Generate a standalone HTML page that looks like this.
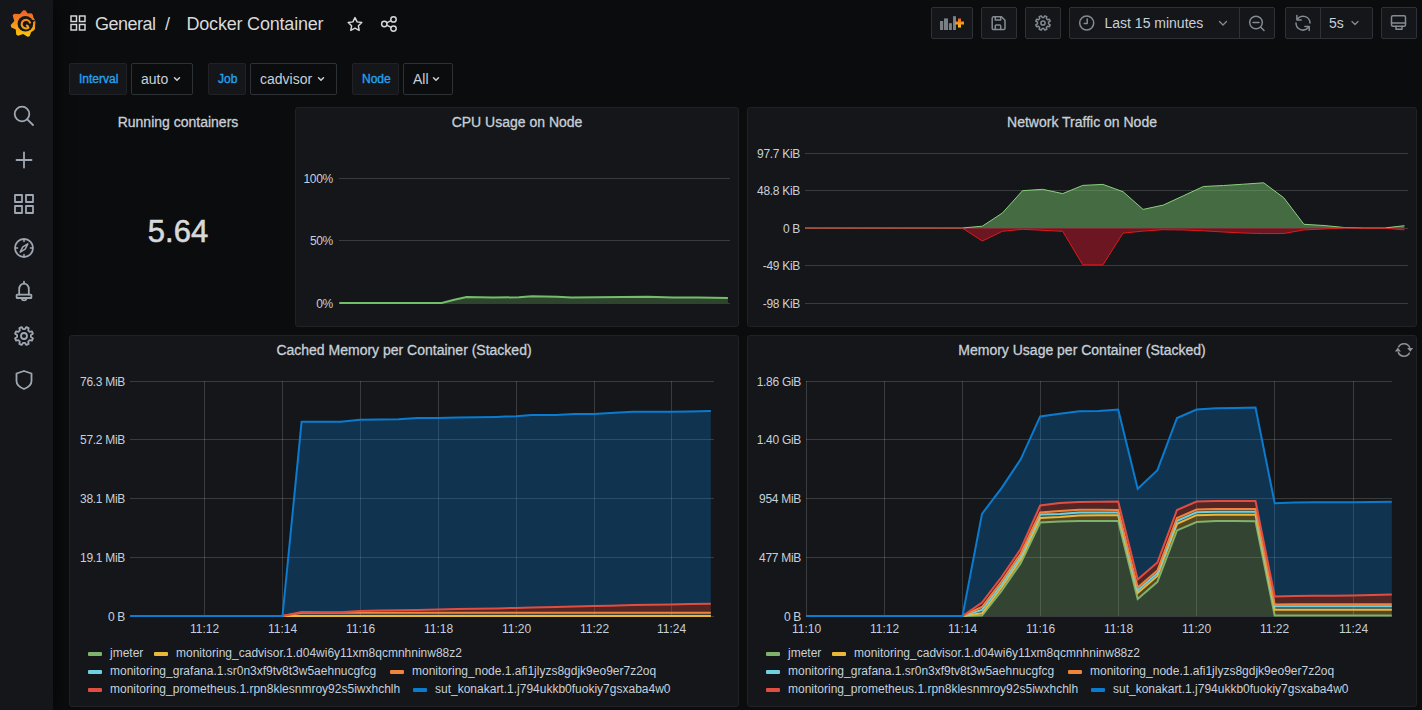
<!DOCTYPE html>
<html><head><meta charset="utf-8"><style>
*{box-sizing:border-box}
html,body{margin:0;padding:0}
body{width:1422px;height:710px;overflow:hidden;background:#0b0c0e;font-family:"Liberation Sans",sans-serif;position:relative;color:#c7d0d9}
.a{position:absolute}
.side{left:0;top:0;width:53px;height:710px;background:#141619;box-shadow:0 0 20px rgba(0,0,0,0.7)}
.btn{position:absolute;top:7px;height:32px;background:#141619;border:1px solid #2c3235;border-radius:2px}
.lbl{position:absolute;top:63px;height:32px;background:#141619;border:1px solid #202226;border-radius:2px;color:#24a2f0;font-size:12px;font-weight:400;line-height:30px;padding-left:9px;-webkit-text-stroke:0.35px #24a2f0}
.dd{position:absolute;top:63px;height:32px;background:#0b0c0e;border:1px solid #2c3235;border-radius:2px;color:#c7d0d9;font-size:14px;line-height:30px;padding-left:9px}
.panel{position:absolute;background:#141619;border:1px solid #202226;border-radius:3px}
.ptitle{position:absolute;left:0;right:0;top:6px;text-align:center;font-size:14px;color:#c7d0d9;-webkit-text-stroke:0.3px #c7d0d9;white-space:nowrap}
.ylab{position:absolute;font-size:12px;letter-spacing:-0.3px;color:#c7d0d9;text-align:right;white-space:nowrap;width:80px}
.xlab{position:absolute;font-size:12px;color:#c7d0d9;text-align:center;white-space:nowrap;width:60px}
.leg{position:absolute;font-size:12px;color:#c7d0d9;white-space:nowrap}
.sw{position:absolute;width:14px;height:4px;border-radius:1px}
svg{position:absolute;left:0;top:0;overflow:visible}
</style></head><body>

<div class="a side"></div>

<svg width="53" height="400" style="left:0;top:0">
 <defs>
  <linearGradient id="lg" gradientUnits="userSpaceOnUse" x1="0" y1="10" x2="0" y2="37">
   <stop offset="0" stop-color="#f05a28"/><stop offset="1" stop-color="#fbca0a"/>
  </linearGradient>
  <linearGradient id="lg2" gradientUnits="userSpaceOnUse" x1="0" y1="10" x2="0" y2="37">
   <stop offset="0" stop-color="#f05a28"/><stop offset="1" stop-color="#fbca0a"/>
  </linearGradient>
 </defs>
 <path fill="url(#lg)" d="M23.26,10.36 L25.34,10.32 L27.80,13.49 L31.11,13.16 L32.65,14.30 L33.48,17.81 L35.08,20.37 L35.45,22.04 L35.08,25.21 L35.02,28.60 L34.12,30.16 L31.20,31.90 L29.60,36.25 L27.57,36.87 L23.14,34.10 L18.03,35.75 L16.22,34.58 L15.78,29.49 L11.14,27.16 L10.75,25.02 L14.32,21.02 L12.63,15.51 L14.04,13.75 L19.89,14.10 Z"/>
 <circle cx="25.4" cy="23.8" r="7.8" fill="#141619"/>
 <path fill="#141619" d="M31.2,19.6 L35.6,20.6 L32.4,22.6 Z"/>
 <path fill="none" stroke="url(#lg2)" stroke-width="2.1" stroke-linecap="round" d="M30.0,22.6 A4.3,4.3 0 1 0 28.4,27.7 Q28.0,26.0 26.8,25.5"/>
 <g fill="none" stroke="#9fa7b3" stroke-width="1.8" stroke-linecap="round" stroke-linejoin="round">
  <circle cx="22" cy="114" r="7.3"/><line x1="27.3" y1="119.3" x2="33" y2="125"/>
  <line x1="24" y1="152.5" x2="24" y2="167.5"/><line x1="16.5" y1="160" x2="31.5" y2="160"/>
  <rect x="15" y="195" width="7" height="7"/><rect x="26" y="195" width="7" height="7"/><rect x="15" y="206" width="7" height="7"/><rect x="26" y="206" width="7" height="7"/>
  <circle cx="24" cy="248" r="9"/>
  <path d="M24,239.8 v1.8 M32.2,248 h-1.8 M24,256.2 v-1.8 M15.8,248 h1.8" stroke-width="1.5"/>
  <path d="M27.8,243.8 L25.2,249.1 L20.2,252.2 L22.8,246.9 Z" stroke-width="1.5"/>
  <path d="M19.2,294.5 V289 A4.8,5.4 0 0 1 28.8,289 V294.5"/><rect x="16.6" y="294.6" width="14.8" height="3.4" rx="0.6"/><path d="M21.6,298.4 A2.6,2.6 0 0 0 26.6,298.4"/><line x1="24" y1="281.6" x2="24" y2="283.4"/>
  <circle cx="24" cy="336" r="3"/>
  <path d="M30.92,337.04 L32.91,338.29 L31.92,340.68 L29.63,340.16 L28.16,341.63 L28.68,343.92 L26.29,344.91 L25.04,342.92 L22.96,342.92 L21.71,344.91 L19.32,343.92 L19.84,341.63 L18.37,340.16 L16.08,340.68 L15.09,338.29 L17.08,337.04 L17.08,334.96 L15.09,333.71 L16.08,331.32 L18.37,331.84 L19.84,330.37 L19.32,328.08 L21.71,327.09 L22.96,329.08 L25.04,329.08 L26.29,327.09 L28.68,328.08 L28.16,330.37 L29.63,331.84 L31.92,331.32 L32.91,333.71 L30.92,334.96 Z"/>
  <path d="M24,371 L31.5,373.5 L31.5,381 Q31.5,386 24,389 Q16.5,386 16.5,381 L16.5,373.5 Z"/>
 </g>
</svg>


<svg width="1422" height="50" style="left:0;top:0">
 <g fill="none" stroke="#d8d9da" stroke-width="1.45">
  <rect x="71" y="16" width="5.5" height="5.5"/><rect x="79.5" y="16" width="5.5" height="5.5"/><rect x="71" y="24.5" width="5.5" height="5.5"/><rect x="79.5" y="24.5" width="5.5" height="5.5"/>
  <path stroke-linejoin="round" d="M355,17.6 L357.1,21.9 L361.8,22.5 L358.4,25.8 L359.2,30.4 L355,28.2 L350.8,30.4 L351.6,25.8 L348.2,22.5 L352.9,21.9 Z"/>
  <circle cx="384.3" cy="24" r="2.7"/><circle cx="393.5" cy="19.4" r="2.7"/><circle cx="393.5" cy="28.6" r="2.7"/>
  <line x1="386.7" y1="22.8" x2="391.1" y2="20.6"/><line x1="386.7" y1="25.2" x2="391.1" y2="27.4"/>
 </g>
</svg>
<div class="a" style="left:95px;top:14px;font-size:18px;line-height:20px;color:#d8d9da;white-space:nowrap;letter-spacing:-0.5px">General</div>
<div class="a" style="left:165px;top:14px;font-size:18px;line-height:20px;color:#d8d9da">/</div>
<div class="a" style="left:186.5px;top:14px;font-size:18px;line-height:20px;color:#d8d9da;white-space:nowrap;letter-spacing:-0.2px">Docker Container</div>

<div class="btn" style="left:931px;width:42px"></div>
<div class="btn" style="left:981px;width:36px"></div>
<div class="btn" style="left:1025px;width:36px"></div>
<div class="btn" style="left:1069px;width:206px"></div>
<div class="btn" style="left:1285px;width:88px"></div>
<div class="btn" style="left:1381px;width:36px"></div>
<div class="a" style="left:1239px;top:8px;width:1px;height:30px;background:#2c3235"></div>
<div class="a" style="left:1320px;top:8px;width:1px;height:30px;background:#2c3235"></div>
<div class="a" style="left:1104.5px;top:14px;font-size:14px;line-height:18px;color:#c7d0d9;white-space:nowrap">Last 15 minutes</div>
<div class="a" style="left:1329px;top:14px;font-size:14px;line-height:18px;color:#c7d0d9;white-space:nowrap">5s</div>
<svg width="1422" height="50" style="left:0;top:0">
 <defs><linearGradient id="og" x1="0" y1="0" x2="0" y2="1"><stop offset="0" stop-color="#f05a28"/><stop offset="1" stop-color="#fbca0a"/></linearGradient></defs>
 <g fill="#7b8087">
  <rect x="940" y="21" width="3.2" height="9"/><rect x="944" y="18.4" width="4" height="11.6"/><rect x="948.9" y="23.2" width="3" height="6.8"/><rect x="953" y="16.2" width="3" height="13.8"/>
 </g>
 <path fill="url(#og)" d="M958,18.4 h3 v3 h3 v3 h-3 v3 h-3 v-3 h-3 v-3 h3 Z"/>
 <g fill="none" stroke="#858b93" stroke-width="1.5" stroke-linejoin="round" stroke-linecap="round">
  <path d="M993.5,16.8 h8 l3.5,3.5 v8 a1.3,1.3 0 0 1 -1.3,1.3 h-10.2 a1.3,1.3 0 0 1 -1.3,-1.3 v-10.2 a1.3,1.3 0 0 1 1.3,-1.3 Z"/>
  <path d="M995.3,16.8 v3.2 h5.4 v-3.2 M995.3,29.6 v-3.6 a0.9,0.9 0 0 1 0.9,-0.9 h3.6 a0.9,0.9 0 0 1 0.9,0.9 v3.6"/>
  <circle cx="1043" cy="23" r="2.1"/>
  <path d="M1048.54,23.83 L1050.17,24.84 L1049.37,26.77 L1047.50,26.33 L1046.33,27.50 L1046.77,29.37 L1044.84,30.17 L1043.83,28.54 L1042.17,28.54 L1041.16,30.17 L1039.23,29.37 L1039.67,27.50 L1038.50,26.33 L1036.63,26.77 L1035.83,24.84 L1037.46,23.83 L1037.46,22.17 L1035.83,21.16 L1036.63,19.23 L1038.50,19.67 L1039.67,18.50 L1039.23,16.63 L1041.16,15.83 L1042.17,17.46 L1043.83,17.46 L1044.84,15.83 L1046.77,16.63 L1046.33,18.50 L1047.50,19.67 L1049.37,19.23 L1050.17,21.16 L1048.54,22.17 Z"/>
  <circle cx="1086.7" cy="23" r="7"/><path d="M1087.2,19 v4.5 h-3"/>
  <path d="M1219.5,21.5 l3.5,3.5 l3.5,-3.5" stroke-width="1.3"/>
  <circle cx="1256" cy="22.5" r="6.3"/><line x1="1253" y1="22.5" x2="1259" y2="22.5"/><line x1="1260.8" y1="27.3" x2="1264" y2="30.5"/>
  <path d="M1297.6,18.8 A7,7 0 0 1 1310,23"/><path d="M1296.9,15.5 V20.1 H1301.2"/>
  <path d="M1296,23 A7,7 0 0 0 1308.3,27.6"/><path d="M1304.9,26.4 H1309.2 V30.6"/>
  <path d="M1352,21.5 l3,3 l3,-3" stroke-width="1.3"/>
  <rect x="1391.5" y="15.8" width="14" height="10.5" rx="1.5"/><line x1="1391.5" y1="23" x2="1405.5" y2="23"/><path d="M1396,26.3 v3 h6 v-3"/>
 </g>
</svg>


<div class="lbl" style="left:69px;width:58px">Interval</div>
<div class="dd" style="left:131px;width:62px">auto</div>
<div class="lbl" style="left:208px;width:38px">Job</div>
<div class="dd" style="left:250px;width:87px">cadvisor</div>
<div class="lbl" style="left:352px;width:47px">Node</div>
<div class="dd" style="left:403px;width:50px">All</div>
<svg width="500" height="100" style="left:0;top:0">
 <g fill="none" stroke="#c7d0d9" stroke-width="1.5" stroke-linecap="round" stroke-linejoin="round">
  <path d="M174.5,77.8 l2.5,2.5 l2.5,-2.5"/>
  <path d="M318.5,77.8 l2.5,2.5 l2.5,-2.5"/>
  <path d="M433.5,77.8 l2.5,2.5 l2.5,-2.5"/>
 </g>
</svg>

<div class="panel" style="left:295px;top:107px;width:444px;height:220px"><div class="ptitle">CPU Usage on Node</div></div>
<div class="panel" style="left:747px;top:107px;width:670px;height:220px"><div class="ptitle">Network Traffic on Node</div></div>
<div class="panel" style="left:69px;top:335px;width:670px;height:372px"><div class="ptitle">Cached Memory per Container (Stacked)</div></div>
<div class="panel" style="left:747px;top:335px;width:670px;height:372px"><div class="ptitle">Memory Usage per Container (Stacked)</div></div>
<div class="a" style="left:69px;top:107px;width:218px;height:220px"><div class="ptitle" style="top:7px">Running containers</div><div class="a" style="left:0;right:0;top:107px;text-align:center;font-size:31px;color:#d8d9da;-webkit-text-stroke:0.6px #d8d9da">5.64</div></div>
<svg width="1422" height="710" viewBox="0 0 1422 710">
<line x1="339" y1="178.5" x2="730" y2="178.5" stroke="rgba(255,255,255,0.16)" stroke-width="1"/>
<line x1="339" y1="240.5" x2="730" y2="240.5" stroke="rgba(255,255,255,0.16)" stroke-width="1"/>
<line x1="339" y1="303.5" x2="730" y2="303.5" stroke="rgba(255,255,255,0.16)" stroke-width="1"/>
<path d="M339.3,302.9 L441.8,302.9 L454.2,299.8 L466.6,297.1 L493.0,297.5 L518.9,297.3 L531.8,296.3 L557.0,296.8 L571.7,297.4 L597.0,297.2 L622.0,296.9 L648.0,296.8 L673.0,297.4 L698.0,297.5 L727.9,297.9 L727.9,303 L339.3,303 Z" fill="#73bf69" fill-opacity="0.28"/>
<path d="M339.3,302.9 L441.8,302.9 L454.2,299.8 L466.6,297.1 L493.0,297.5 L518.9,297.3 L531.8,296.3 L557.0,296.8 L571.7,297.4 L597.0,297.2 L622.0,296.9 L648.0,296.8 L673.0,297.4 L698.0,297.5 L727.9,297.9" fill="none" stroke="#73bf69" stroke-width="2"/>
<line x1="805" y1="153.5" x2="1408" y2="153.5" stroke="rgba(255,255,255,0.16)" stroke-width="1"/>
<line x1="805" y1="190.5" x2="1408" y2="190.5" stroke="rgba(255,255,255,0.16)" stroke-width="1"/>
<line x1="805" y1="228.5" x2="1408" y2="228.5" stroke="rgba(255,255,255,0.16)" stroke-width="1"/>
<line x1="805" y1="265.5" x2="1408" y2="265.5" stroke="rgba(255,255,255,0.16)" stroke-width="1"/>
<line x1="805" y1="303.5" x2="1408" y2="303.5" stroke="rgba(255,255,255,0.16)" stroke-width="1"/>
<path d="M805.0,228.0 L821.5,228.0 L841.6,228.0 L861.7,228.0 L881.8,228.0 L901.9,228.0 L922.0,228.0 L942.1,228.0 L962.2,228.0 L982.3,226.2 L1002.4,213.0 L1022.5,190.7 L1042.6,189.3 L1062.7,193.6 L1082.8,185.4 L1102.9,184.4 L1123.0,191.7 L1143.1,209.4 L1163.2,205.1 L1183.3,195.8 L1203.4,186.5 L1223.5,185.5 L1243.6,184.2 L1263.7,182.8 L1283.8,197.8 L1303.9,224.3 L1324.0,225.5 L1344.1,227.5 L1364.2,228.0 L1384.3,228.0 L1404.4,225.7 L1404.4,228.0 L805,228.0 Z" fill="#73bf69" fill-opacity="0.5"/>
<path d="M805.0,228.0 L821.5,228.0 L841.6,228.0 L861.7,228.0 L881.8,228.0 L901.9,228.0 L922.0,228.0 L942.1,228.0 L962.2,228.0 L982.3,241.0 L1002.4,231.3 L1022.5,229.3 L1042.6,230.3 L1062.7,231.3 L1082.8,264.9 L1102.9,264.9 L1123.0,233.1 L1143.1,231.1 L1163.2,229.7 L1183.3,230.0 L1203.4,230.8 L1223.5,232.0 L1243.6,233.0 L1263.7,233.6 L1283.8,233.5 L1303.9,229.9 L1324.0,229.0 L1344.1,228.0 L1364.2,228.2 L1384.3,228.2 L1404.4,229.9 L1404.4,228.0 L805,228.0 Z" fill="#c4162a" fill-opacity="0.5"/>
<path d="M805.0,228.0 L821.5,228.0 L841.6,228.0 L861.7,228.0 L881.8,228.0 L901.9,228.0 L922.0,228.0 L942.1,228.0 L962.2,228.0 L982.3,226.2 L1002.4,213.0 L1022.5,190.7 L1042.6,189.3 L1062.7,193.6 L1082.8,185.4 L1102.9,184.4 L1123.0,191.7 L1143.1,209.4 L1163.2,205.1 L1183.3,195.8 L1203.4,186.5 L1223.5,185.5 L1243.6,184.2 L1263.7,182.8 L1283.8,197.8 L1303.9,224.3 L1324.0,225.5 L1344.1,227.5 L1364.2,228.0 L1384.3,228.0 L1404.4,225.7" fill="none" stroke="#8ccf80" stroke-width="1"/>
<path d="M805.0,228.0 L821.5,228.0 L841.6,228.0 L861.7,228.0 L881.8,228.0 L901.9,228.0 L922.0,228.0 L942.1,228.0 L962.2,228.0 L982.3,241.0 L1002.4,231.3 L1022.5,229.3 L1042.6,230.3 L1062.7,231.3 L1082.8,264.9 L1102.9,264.9 L1123.0,233.1 L1143.1,231.1 L1163.2,229.7 L1183.3,230.0 L1203.4,230.8 L1223.5,232.0 L1243.6,233.0 L1263.7,233.6 L1283.8,233.5 L1303.9,229.9 L1324.0,229.0 L1344.1,228.0 L1364.2,228.2 L1384.3,228.2 L1404.4,229.9" fill="none" stroke="#e01a1a" stroke-width="1"/>
<line x1="130" y1="381.5" x2="714" y2="381.5" stroke="rgba(255,255,255,0.16)" stroke-width="1"/>
<line x1="130" y1="439.5" x2="714" y2="439.5" stroke="rgba(255,255,255,0.16)" stroke-width="1"/>
<line x1="130" y1="498.5" x2="714" y2="498.5" stroke="rgba(255,255,255,0.16)" stroke-width="1"/>
<line x1="130" y1="557.5" x2="714" y2="557.5" stroke="rgba(255,255,255,0.16)" stroke-width="1"/>
<line x1="130" y1="616.5" x2="714" y2="616.5" stroke="rgba(255,255,255,0.16)" stroke-width="1"/>
<line x1="204.5" y1="381" x2="204.5" y2="616" stroke="rgba(255,255,255,0.16)" stroke-width="1"/>
<line x1="282.5" y1="381" x2="282.5" y2="616" stroke="rgba(255,255,255,0.16)" stroke-width="1"/>
<line x1="360.5" y1="381" x2="360.5" y2="616" stroke="rgba(255,255,255,0.16)" stroke-width="1"/>
<line x1="438.5" y1="381" x2="438.5" y2="616" stroke="rgba(255,255,255,0.16)" stroke-width="1"/>
<line x1="516.5" y1="381" x2="516.5" y2="616" stroke="rgba(255,255,255,0.16)" stroke-width="1"/>
<line x1="594.5" y1="381" x2="594.5" y2="616" stroke="rgba(255,255,255,0.16)" stroke-width="1"/>
<line x1="671.5" y1="381" x2="671.5" y2="616" stroke="rgba(255,255,255,0.16)" stroke-width="1"/>
<line x1="806" y1="381.5" x2="1392" y2="381.5" stroke="rgba(255,255,255,0.16)" stroke-width="1"/>
<line x1="806" y1="439.5" x2="1392" y2="439.5" stroke="rgba(255,255,255,0.16)" stroke-width="1"/>
<line x1="806" y1="498.5" x2="1392" y2="498.5" stroke="rgba(255,255,255,0.16)" stroke-width="1"/>
<line x1="806" y1="557.5" x2="1392" y2="557.5" stroke="rgba(255,255,255,0.16)" stroke-width="1"/>
<line x1="806" y1="616.5" x2="1392" y2="616.5" stroke="rgba(255,255,255,0.16)" stroke-width="1"/>
<line x1="806.5" y1="381" x2="806.5" y2="616" stroke="rgba(255,255,255,0.16)" stroke-width="1"/>
<line x1="884.5" y1="381" x2="884.5" y2="616" stroke="rgba(255,255,255,0.16)" stroke-width="1"/>
<line x1="962.5" y1="381" x2="962.5" y2="616" stroke="rgba(255,255,255,0.16)" stroke-width="1"/>
<line x1="1040.5" y1="381" x2="1040.5" y2="616" stroke="rgba(255,255,255,0.16)" stroke-width="1"/>
<line x1="1118.5" y1="381" x2="1118.5" y2="616" stroke="rgba(255,255,255,0.16)" stroke-width="1"/>
<line x1="1196.5" y1="381" x2="1196.5" y2="616" stroke="rgba(255,255,255,0.16)" stroke-width="1"/>
<line x1="1274.5" y1="381" x2="1274.5" y2="616" stroke="rgba(255,255,255,0.16)" stroke-width="1"/>
<line x1="1353.5" y1="381" x2="1353.5" y2="616" stroke="rgba(255,255,255,0.16)" stroke-width="1"/>
<path d="M130.0,616.0 L282.5,616.0 L301.6,421.7 L321.0,421.7 L340.0,421.7 L340.8,421.7 L360.0,419.8 L379.5,419.5 L398.4,419.3 L417.6,418.0 L438.0,418.0 L457.5,417.6 L477.0,417.3 L496.5,416.9 L505.0,416.6 L516.0,416.3 L531.8,415.1 L556.0,415.0 L574.0,414.1 L593.7,414.0 L610.4,412.9 L633.0,411.8 L652.0,411.8 L670.8,411.8 L690.0,411.4 L710.8,410.9 L710.8,603.7 L690.0,604.1 L670.8,604.4 L652.0,604.8 L633.0,605.1 L610.4,605.7 L593.7,606.1 L574.0,606.6 L556.0,607.0 L531.8,607.6 L516.0,607.9 L505.0,608.2 L496.5,608.4 L477.0,608.7 L457.5,609.1 L438.0,609.5 L417.6,609.9 L398.4,610.3 L379.5,610.6 L360.0,611.0 L340.8,612.2 L340.0,612.3 L321.0,612.2 L301.6,612.0 L282.5,616.0 L130.0,616.0 Z" fill="#0a7bcf" fill-opacity="0.3"/>
<path d="M130.0,616.0 L282.5,616.0 L301.6,612.0 L321.0,612.2 L340.0,612.3 L340.8,612.2 L360.0,611.0 L379.5,610.6 L398.4,610.3 L417.6,609.9 L438.0,609.5 L457.5,609.1 L477.0,608.7 L496.5,608.4 L505.0,608.2 L516.0,607.9 L531.8,607.6 L556.0,607.0 L574.0,606.6 L593.7,606.1 L610.4,605.7 L633.0,605.1 L652.0,604.8 L670.8,604.4 L690.0,604.1 L710.8,603.7 L710.8,612.8 L690.0,612.8 L670.8,612.8 L652.0,612.8 L633.0,612.8 L610.4,612.8 L593.7,612.8 L574.0,612.8 L556.0,612.8 L531.8,612.8 L516.0,612.8 L505.0,612.8 L496.5,612.8 L477.0,612.8 L457.5,612.8 L438.0,612.8 L417.6,612.8 L398.4,612.8 L379.5,612.8 L360.0,612.8 L340.8,612.8 L340.0,612.8 L321.0,612.8 L301.6,612.8 L282.5,616.0 L130.0,616.0 Z" fill="#e24d42" fill-opacity="0.3"/>
<path d="M130.0,616.0 L282.5,616.0 L301.6,612.8 L321.0,612.8 L340.0,612.8 L340.8,612.8 L360.0,612.8 L379.5,612.8 L398.4,612.8 L417.6,612.8 L438.0,612.8 L457.5,612.8 L477.0,612.8 L496.5,612.8 L505.0,612.8 L516.0,612.8 L531.8,612.8 L556.0,612.8 L574.0,612.8 L593.7,612.8 L610.4,612.8 L633.0,612.8 L652.0,612.8 L670.8,612.8 L690.0,612.8 L710.8,612.8 L710.8,614.6 L690.0,614.6 L670.8,614.6 L652.0,614.6 L633.0,614.6 L610.4,614.6 L593.7,614.6 L574.0,614.6 L556.0,614.6 L531.8,614.6 L516.0,614.6 L505.0,614.6 L496.5,614.6 L477.0,614.6 L457.5,614.6 L438.0,614.6 L417.6,614.6 L398.4,614.6 L379.5,614.6 L360.0,614.6 L340.8,614.6 L340.0,614.6 L321.0,614.6 L301.6,614.6 L282.5,616.0 L130.0,616.0 Z" fill="#ef843c" fill-opacity="0.3"/>
<path d="M130.0,616.0 L282.5,616.0 L301.6,614.6 L321.0,614.6 L340.0,614.6 L340.8,614.6 L360.0,614.6 L379.5,614.6 L398.4,614.6 L417.6,614.6 L438.0,614.6 L457.5,614.6 L477.0,614.6 L496.5,614.6 L505.0,614.6 L516.0,614.6 L531.8,614.6 L556.0,614.6 L574.0,614.6 L593.7,614.6 L610.4,614.6 L633.0,614.6 L652.0,614.6 L670.8,614.6 L690.0,614.6 L710.8,614.6 L710.8,615.9 L690.0,615.9 L670.8,615.9 L652.0,615.9 L633.0,615.9 L610.4,615.9 L593.7,615.9 L574.0,615.9 L556.0,615.9 L531.8,615.9 L516.0,615.9 L505.0,615.9 L496.5,615.9 L477.0,615.9 L457.5,615.9 L438.0,615.9 L417.6,615.9 L398.4,615.9 L379.5,615.9 L360.0,615.9 L340.8,615.9 L340.0,615.9 L321.0,615.9 L301.6,615.9 L282.5,616.0 L130.0,616.0 Z" fill="#6ed0e0" fill-opacity="0.3"/>
<path d="M130.0,616.0 L282.5,616.0 L301.6,615.9 L321.0,615.9 L340.0,615.9 L340.8,615.9 L360.0,615.9 L379.5,615.9 L398.4,615.9 L417.6,615.9 L438.0,615.9 L457.5,615.9 L477.0,615.9 L496.5,615.9 L505.0,615.9 L516.0,615.9 L531.8,615.9 L556.0,615.9 L574.0,615.9 L593.7,615.9 L610.4,615.9 L633.0,615.9 L652.0,615.9 L670.8,615.9 L690.0,615.9 L710.8,615.9 L710.8,616.0 L690.0,616.0 L670.8,616.0 L652.0,616.0 L633.0,616.0 L610.4,616.0 L593.7,616.0 L574.0,616.0 L556.0,616.0 L531.8,616.0 L516.0,616.0 L505.0,616.0 L496.5,616.0 L477.0,616.0 L457.5,616.0 L438.0,616.0 L417.6,616.0 L398.4,616.0 L379.5,616.0 L360.0,616.0 L340.8,616.0 L340.0,616.0 L321.0,616.0 L301.6,616.0 L282.5,616.0 L130.0,616.0 Z" fill="#eab839" fill-opacity="0.3"/>
<path d="M130.0,616.0 L282.5,616.0 L301.6,616.0 L321.0,616.0 L340.0,616.0 L340.8,616.0 L360.0,616.0 L379.5,616.0 L398.4,616.0 L417.6,616.0 L438.0,616.0 L457.5,616.0 L477.0,616.0 L496.5,616.0 L505.0,616.0 L516.0,616.0 L531.8,616.0 L556.0,616.0 L574.0,616.0 L593.7,616.0 L610.4,616.0 L633.0,616.0 L652.0,616.0 L670.8,616.0 L690.0,616.0 L710.8,616.0 L710.8,616.0 L690.0,616.0 L670.8,616.0 L652.0,616.0 L633.0,616.0 L610.4,616.0 L593.7,616.0 L574.0,616.0 L556.0,616.0 L531.8,616.0 L516.0,616.0 L505.0,616.0 L496.5,616.0 L477.0,616.0 L457.5,616.0 L438.0,616.0 L417.6,616.0 L398.4,616.0 L379.5,616.0 L360.0,616.0 L340.8,616.0 L340.0,616.0 L321.0,616.0 L301.6,616.0 L282.5,616.0 L130.0,616.0 Z" fill="#7eb26d" fill-opacity="0.3"/>
<path d="M130.0,616.0 L282.5,616.0 L301.6,616.0 L321.0,616.0 L340.0,616.0 L340.8,616.0 L360.0,616.0 L379.5,616.0 L398.4,616.0 L417.6,616.0 L438.0,616.0 L457.5,616.0 L477.0,616.0 L496.5,616.0 L505.0,616.0 L516.0,616.0 L531.8,616.0 L556.0,616.0 L574.0,616.0 L593.7,616.0 L610.4,616.0 L633.0,616.0 L652.0,616.0 L670.8,616.0 L690.0,616.0 L710.8,616.0" fill="none" stroke="#7eb26d" stroke-width="2" stroke-linejoin="round"/>
<path d="M130.0,616.0 L282.5,616.0 L301.6,615.9 L321.0,615.9 L340.0,615.9 L340.8,615.9 L360.0,615.9 L379.5,615.9 L398.4,615.9 L417.6,615.9 L438.0,615.9 L457.5,615.9 L477.0,615.9 L496.5,615.9 L505.0,615.9 L516.0,615.9 L531.8,615.9 L556.0,615.9 L574.0,615.9 L593.7,615.9 L610.4,615.9 L633.0,615.9 L652.0,615.9 L670.8,615.9 L690.0,615.9 L710.8,615.9" fill="none" stroke="#eab839" stroke-width="2" stroke-linejoin="round"/>
<path d="M130.0,616.0 L282.5,616.0 L301.6,612.8 L321.0,612.8 L340.0,612.8 L340.8,612.8 L360.0,612.8 L379.5,612.8 L398.4,612.8 L417.6,612.8 L438.0,612.8 L457.5,612.8 L477.0,612.8 L496.5,612.8 L505.0,612.8 L516.0,612.8 L531.8,612.8 L556.0,612.8 L574.0,612.8 L593.7,612.8 L610.4,612.8 L633.0,612.8 L652.0,612.8 L670.8,612.8 L690.0,612.8 L710.8,612.8" fill="none" stroke="#ef843c" stroke-width="2" stroke-linejoin="round"/>
<path d="M130.0,616.0 L282.5,616.0 L301.6,612.0 L321.0,612.2 L340.0,612.3 L340.8,612.2 L360.0,611.0 L379.5,610.6 L398.4,610.3 L417.6,609.9 L438.0,609.5 L457.5,609.1 L477.0,608.7 L496.5,608.4 L505.0,608.2 L516.0,607.9 L531.8,607.6 L556.0,607.0 L574.0,606.6 L593.7,606.1 L610.4,605.7 L633.0,605.1 L652.0,604.8 L670.8,604.4 L690.0,604.1 L710.8,603.7" fill="none" stroke="#e24d42" stroke-width="2" stroke-linejoin="round"/>
<path d="M130.0,616.0 L282.5,616.0 L301.6,421.7 L321.0,421.7 L340.0,421.7 L340.8,421.7 L360.0,419.8 L379.5,419.5 L398.4,419.3 L417.6,418.0 L438.0,418.0 L457.5,417.6 L477.0,417.3 L496.5,416.9 L505.0,416.6 L516.0,416.3 L531.8,415.1 L556.0,415.0 L574.0,414.1 L593.7,414.0 L610.4,412.9 L633.0,411.8 L652.0,411.8 L670.8,411.8 L690.0,411.4 L710.8,410.9" fill="none" stroke="#0a7bcf" stroke-width="2" stroke-linejoin="round"/>
<path d="M806.2,616.0 L962.5,616.0 L982.0,513.8 L1001.5,488.1 L1020.7,459.3 L1040.2,416.4 L1059.7,413.7 L1079.1,411.3 L1098.6,411.0 L1118.2,409.6 L1137.7,488.8 L1157.4,470.2 L1177.0,418.0 L1196.6,409.6 L1216.0,408.3 L1235.5,408.0 L1255.5,407.6 L1274.7,503.3 L1294.2,502.5 L1313.7,502.3 L1333.2,502.2 L1352.7,502.3 L1372.2,502.0 L1391.8,501.8 L1391.8,594.6 L1372.2,595.0 L1352.7,595.6 L1333.2,595.8 L1313.7,595.8 L1294.2,596.0 L1274.7,596.5 L1255.5,501.0 L1235.5,501.0 L1216.0,501.0 L1196.6,501.6 L1177.0,510.0 L1157.4,562.5 L1137.7,579.4 L1118.2,501.6 L1098.6,501.8 L1079.1,502.0 L1059.7,503.0 L1040.2,505.5 L1020.7,549.0 L1001.5,577.0 L982.0,602.6 L962.5,616.0 L806.2,616.0 Z" fill="#0a7bcf" fill-opacity="0.3"/>
<path d="M806.2,616.0 L962.5,616.0 L982.0,602.6 L1001.5,577.0 L1020.7,549.0 L1040.2,505.5 L1059.7,503.0 L1079.1,502.0 L1098.6,501.8 L1118.2,501.6 L1137.7,579.4 L1157.4,562.5 L1177.0,510.0 L1196.6,501.6 L1216.0,501.0 L1235.5,501.0 L1255.5,501.0 L1274.7,596.5 L1294.2,596.0 L1313.7,595.8 L1333.2,595.8 L1352.7,595.6 L1372.2,595.0 L1391.8,594.6 L1391.8,604.3 L1372.2,604.3 L1352.7,604.3 L1333.2,604.3 L1313.7,604.3 L1294.2,604.3 L1274.7,604.4 L1255.5,509.0 L1235.5,509.0 L1216.0,509.0 L1196.6,509.5 L1177.0,518.0 L1157.4,570.5 L1137.7,587.5 L1118.2,509.9 L1098.6,509.8 L1079.1,509.8 L1059.7,511.0 L1040.2,512.5 L1020.7,553.7 L1001.5,581.5 L982.0,607.0 L962.5,616.0 L806.2,616.0 Z" fill="#e24d42" fill-opacity="0.3"/>
<path d="M806.2,616.0 L962.5,616.0 L982.0,607.0 L1001.5,581.5 L1020.7,553.7 L1040.2,512.5 L1059.7,511.0 L1079.1,509.8 L1098.6,509.8 L1118.2,509.9 L1137.7,587.5 L1157.4,570.5 L1177.0,518.0 L1196.6,509.5 L1216.0,509.0 L1235.5,509.0 L1255.5,509.0 L1274.7,604.4 L1294.2,604.3 L1313.7,604.3 L1333.2,604.3 L1352.7,604.3 L1372.2,604.3 L1391.8,604.3 L1391.8,606.3 L1372.2,606.3 L1352.7,606.3 L1333.2,606.3 L1313.7,606.3 L1294.2,606.3 L1274.7,606.3 L1255.5,511.8 L1235.5,511.8 L1216.0,511.8 L1196.6,512.3 L1177.0,520.8 L1157.4,573.2 L1137.7,590.2 L1118.2,512.5 L1098.6,512.5 L1079.1,512.5 L1059.7,514.0 L1040.2,514.6 L1020.7,556.5 L1001.5,584.5 L982.0,609.9 L962.5,616.0 L806.2,616.0 Z" fill="#ef843c" fill-opacity="0.3"/>
<path d="M806.2,616.0 L962.5,616.0 L982.0,609.9 L1001.5,584.5 L1020.7,556.5 L1040.2,514.6 L1059.7,514.0 L1079.1,512.5 L1098.6,512.5 L1118.2,512.5 L1137.7,590.2 L1157.4,573.2 L1177.0,520.8 L1196.6,512.3 L1216.0,511.8 L1235.5,511.8 L1255.5,511.8 L1274.7,606.3 L1294.2,606.3 L1313.7,606.3 L1333.2,606.3 L1352.7,606.3 L1372.2,606.3 L1391.8,606.3 L1391.8,609.8 L1372.2,609.8 L1352.7,609.8 L1333.2,609.8 L1313.7,609.8 L1294.2,609.8 L1274.7,609.8 L1255.5,514.8 L1235.5,514.8 L1216.0,514.8 L1196.6,515.2 L1177.0,523.8 L1157.4,576.0 L1137.7,593.0 L1118.2,515.2 L1098.6,515.3 L1079.1,515.5 L1059.7,517.0 L1040.2,518.0 L1020.7,559.5 L1001.5,587.5 L982.0,613.3 L962.5,616.0 L806.2,616.0 Z" fill="#6ed0e0" fill-opacity="0.3"/>
<path d="M806.2,616.0 L962.5,616.0 L982.0,613.3 L1001.5,587.5 L1020.7,559.5 L1040.2,518.0 L1059.7,517.0 L1079.1,515.5 L1098.6,515.3 L1118.2,515.2 L1137.7,593.0 L1157.4,576.0 L1177.0,523.8 L1196.6,515.2 L1216.0,514.8 L1235.5,514.8 L1255.5,514.8 L1274.7,609.8 L1294.2,609.8 L1313.7,609.8 L1333.2,609.8 L1352.7,609.8 L1372.2,609.8 L1391.8,609.8 L1391.8,615.5 L1372.2,615.5 L1352.7,615.5 L1333.2,615.5 L1313.7,615.5 L1294.2,615.5 L1274.7,615.5 L1255.5,521.3 L1235.5,521.0 L1216.0,521.0 L1196.6,522.0 L1177.0,530.4 L1157.4,581.8 L1137.7,599.0 L1118.2,521.0 L1098.6,521.0 L1079.1,521.0 L1059.7,521.5 L1040.2,522.5 L1020.7,563.2 L1001.5,591.0 L982.0,615.6 L962.5,616.0 L806.2,616.0 Z" fill="#eab839" fill-opacity="0.3"/>
<path d="M806.2,616.0 L962.5,616.0 L982.0,615.6 L1001.5,591.0 L1020.7,563.2 L1040.2,522.5 L1059.7,521.5 L1079.1,521.0 L1098.6,521.0 L1118.2,521.0 L1137.7,599.0 L1157.4,581.8 L1177.0,530.4 L1196.6,522.0 L1216.0,521.0 L1235.5,521.0 L1255.5,521.3 L1274.7,615.5 L1294.2,615.5 L1313.7,615.5 L1333.2,615.5 L1352.7,615.5 L1372.2,615.5 L1391.8,615.5 L1391.8,616.0 L1372.2,616.0 L1352.7,616.0 L1333.2,616.0 L1313.7,616.0 L1294.2,616.0 L1274.7,616.0 L1255.5,616.0 L1235.5,616.0 L1216.0,616.0 L1196.6,616.0 L1177.0,616.0 L1157.4,616.0 L1137.7,616.0 L1118.2,616.0 L1098.6,616.0 L1079.1,616.0 L1059.7,616.0 L1040.2,616.0 L1020.7,616.0 L1001.5,616.0 L982.0,616.0 L962.5,616.0 L806.2,616.0 Z" fill="#7eb26d" fill-opacity="0.3"/>
<path d="M806.2,616.0 L962.5,616.0 L982.0,615.6 L1001.5,591.0 L1020.7,563.2 L1040.2,522.5 L1059.7,521.5 L1079.1,521.0 L1098.6,521.0 L1118.2,521.0 L1137.7,599.0 L1157.4,581.8 L1177.0,530.4 L1196.6,522.0 L1216.0,521.0 L1235.5,521.0 L1255.5,521.3 L1274.7,615.5 L1294.2,615.5 L1313.7,615.5 L1333.2,615.5 L1352.7,615.5 L1372.2,615.5 L1391.8,615.5" fill="none" stroke="#7eb26d" stroke-width="2"/>
<path d="M806.2,616.0 L962.5,616.0 L982.0,613.3 L1001.5,587.5 L1020.7,559.5 L1040.2,518.0 L1059.7,517.0 L1079.1,515.5 L1098.6,515.3 L1118.2,515.2 L1137.7,593.0 L1157.4,576.0 L1177.0,523.8 L1196.6,515.2 L1216.0,514.8 L1235.5,514.8 L1255.5,514.8 L1274.7,609.8 L1294.2,609.8 L1313.7,609.8 L1333.2,609.8 L1352.7,609.8 L1372.2,609.8 L1391.8,609.8" fill="none" stroke="#eab839" stroke-width="2"/>
<path d="M806.2,616.0 L962.5,616.0 L982.0,609.9 L1001.5,584.5 L1020.7,556.5 L1040.2,514.6 L1059.7,514.0 L1079.1,512.5 L1098.6,512.5 L1118.2,512.5 L1137.7,590.2 L1157.4,573.2 L1177.0,520.8 L1196.6,512.3 L1216.0,511.8 L1235.5,511.8 L1255.5,511.8 L1274.7,606.3 L1294.2,606.3 L1313.7,606.3 L1333.2,606.3 L1352.7,606.3 L1372.2,606.3 L1391.8,606.3" fill="none" stroke="#6ed0e0" stroke-width="2"/>
<path d="M806.2,616.0 L962.5,616.0 L982.0,607.0 L1001.5,581.5 L1020.7,553.7 L1040.2,512.5 L1059.7,511.0 L1079.1,509.8 L1098.6,509.8 L1118.2,509.9 L1137.7,587.5 L1157.4,570.5 L1177.0,518.0 L1196.6,509.5 L1216.0,509.0 L1235.5,509.0 L1255.5,509.0 L1274.7,604.4 L1294.2,604.3 L1313.7,604.3 L1333.2,604.3 L1352.7,604.3 L1372.2,604.3 L1391.8,604.3" fill="none" stroke="#ef843c" stroke-width="2"/>
<path d="M806.2,616.0 L962.5,616.0 L982.0,602.6 L1001.5,577.0 L1020.7,549.0 L1040.2,505.5 L1059.7,503.0 L1079.1,502.0 L1098.6,501.8 L1118.2,501.6 L1137.7,579.4 L1157.4,562.5 L1177.0,510.0 L1196.6,501.6 L1216.0,501.0 L1235.5,501.0 L1255.5,501.0 L1274.7,596.5 L1294.2,596.0 L1313.7,595.8 L1333.2,595.8 L1352.7,595.6 L1372.2,595.0 L1391.8,594.6" fill="none" stroke="#e24d42" stroke-width="2"/>
<path d="M806.2,616.0 L962.5,616.0 L982.0,513.8 L1001.5,488.1 L1020.7,459.3 L1040.2,416.4 L1059.7,413.7 L1079.1,411.3 L1098.6,411.0 L1118.2,409.6 L1137.7,488.8 L1157.4,470.2 L1177.0,418.0 L1196.6,409.6 L1216.0,408.3 L1235.5,408.0 L1255.5,407.6 L1274.7,503.3 L1294.2,502.5 L1313.7,502.3 L1333.2,502.2 L1352.7,502.3 L1372.2,502.0 L1391.8,501.8" fill="none" stroke="#0a7bcf" stroke-width="2"/>
</svg>
<div class="ylab" style="left:253px;top:171.5px">100%</div>
<div class="ylab" style="left:253px;top:233.5px">50%</div>
<div class="ylab" style="left:253px;top:296.5px">0%</div>
<div class="ylab" style="left:720px;top:146.5px">97.7 KiB</div>
<div class="ylab" style="left:720px;top:183.5px">48.8 KiB</div>
<div class="ylab" style="left:720px;top:221.5px">0 B</div>
<div class="ylab" style="left:720px;top:258.5px">-49 KiB</div>
<div class="ylab" style="left:720px;top:296.5px">-98 KiB</div>
<div class="ylab" style="left:45px;top:374.5px">76.3 MiB</div>
<div class="ylab" style="left:45px;top:432.5px">57.2 MiB</div>
<div class="ylab" style="left:45px;top:491.5px">38.1 MiB</div>
<div class="ylab" style="left:45px;top:550.5px">19.1 MiB</div>
<div class="ylab" style="left:45px;top:609.5px">0 B</div>
<div class="ylab" style="left:721px;top:374.5px">1.86 GiB</div>
<div class="ylab" style="left:721px;top:432.5px">1.40 GiB</div>
<div class="ylab" style="left:721px;top:491.5px">954 MiB</div>
<div class="ylab" style="left:721px;top:550.5px">477 MiB</div>
<div class="ylab" style="left:721px;top:609.5px">0 B</div>
<div class="xlab" style="left:174.5px;top:622px">11:12</div>
<div class="xlab" style="left:252.5px;top:622px">11:14</div>
<div class="xlab" style="left:330.5px;top:622px">11:16</div>
<div class="xlab" style="left:408.5px;top:622px">11:18</div>
<div class="xlab" style="left:486.5px;top:622px">11:20</div>
<div class="xlab" style="left:564.5px;top:622px">11:22</div>
<div class="xlab" style="left:641.5px;top:622px">11:24</div>
<div class="xlab" style="left:776.5px;top:622px">11:10</div>
<div class="xlab" style="left:854.5px;top:622px">11:12</div>
<div class="xlab" style="left:932.5px;top:622px">11:14</div>
<div class="xlab" style="left:1010.5px;top:622px">11:16</div>
<div class="xlab" style="left:1088.5px;top:622px">11:18</div>
<div class="xlab" style="left:1166.5px;top:622px">11:20</div>
<div class="xlab" style="left:1244.5px;top:622px">11:22</div>
<div class="xlab" style="left:1323.5px;top:622px">11:24</div>
<div class="sw" style="left:88px;top:652px;background:#7eb26d"></div>
<div class="leg" style="left:110px;top:646px">jmeter</div>
<div class="sw" style="left:154px;top:652px;background:#eab839"></div>
<div class="leg" style="left:176px;top:646px">monitoring_cadvisor.1.d04wi6y11xm8qcmnhninw88z2</div>
<div class="sw" style="left:88px;top:670px;background:#6ed0e0"></div>
<div class="leg" style="left:110px;top:664px">monitoring_grafana.1.sr0n3xf9tv8t3w5aehnucgfcg</div>
<div class="sw" style="left:390px;top:670px;background:#ef843c"></div>
<div class="leg" style="left:412px;top:664px">monitoring_node.1.afi1jlyzs8gdjk9eo9er7z2oq</div>
<div class="sw" style="left:88px;top:688px;background:#e24d42"></div>
<div class="leg" style="left:110px;top:682px">monitoring_prometheus.1.rpn8klesnmroy92s5iwxhchlh</div>
<div class="sw" style="left:413px;top:688px;background:#0a7bcf"></div>
<div class="leg" style="left:435px;top:682px">sut_konakart.1.j794ukkb0fuokiy7gsxaba4w0</div>
<div class="sw" style="left:766px;top:652px;background:#7eb26d"></div>
<div class="leg" style="left:788px;top:646px">jmeter</div>
<div class="sw" style="left:832px;top:652px;background:#eab839"></div>
<div class="leg" style="left:854px;top:646px">monitoring_cadvisor.1.d04wi6y11xm8qcmnhninw88z2</div>
<div class="sw" style="left:766px;top:670px;background:#6ed0e0"></div>
<div class="leg" style="left:788px;top:664px">monitoring_grafana.1.sr0n3xf9tv8t3w5aehnucgfcg</div>
<div class="sw" style="left:1068px;top:670px;background:#ef843c"></div>
<div class="leg" style="left:1090px;top:664px">monitoring_node.1.afi1jlyzs8gdjk9eo9er7z2oq</div>
<div class="sw" style="left:766px;top:688px;background:#e24d42"></div>
<div class="leg" style="left:788px;top:682px">monitoring_prometheus.1.rpn8klesnmroy92s5iwxhchlh</div>
<div class="sw" style="left:1091px;top:688px;background:#0a7bcf"></div>
<div class="leg" style="left:1113px;top:682px">sut_konakart.1.j794ukkb0fuokiy7gsxaba4w0</div>
<svg width="1422" height="710" style="left:0;top:0"><g fill="none" stroke="#8e9297" stroke-width="1.5"><path d="M1398.38,347.38 A6.2,6.2 0 0 1 1409.83,347.88"/><path d="M1409.62,352.62 A6.2,6.2 0 0 1 1398.17,352.12"/></g><g fill="#8e9297"><path d="M1407.2,347.9 L1413.2,347.9 L1410.2,351.8 Z"/><path d="M1397.9,347.6 L1394.9,351.5 L1400.9,351.5 Z"/></g></svg>
</body></html>
